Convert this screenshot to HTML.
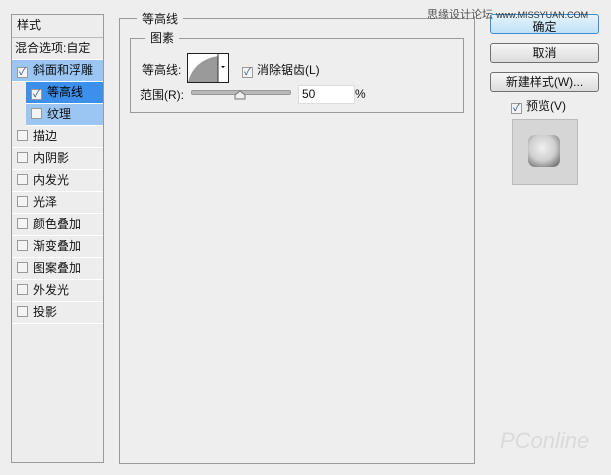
<html><head><style>
body{margin:0;width:611px;height:475px;background:#eeeeee;font-family:"Liberation Sans","Noto Sans CJK SC",sans-serif;font-size:12px;color:#111;position:relative;overflow:hidden}
.a{position:absolute;white-space:nowrap}
.lp{left:11px;top:14px;width:91px;height:447px;border:1px solid #9a9a9a;background:#ededed}
.row{position:absolute;left:0;width:91px;height:21px;border-bottom:1px solid #fff;line-height:21px}
.cb{display:inline-block;width:9px;height:9px;border:1px solid #9a9a9a;background:#f4f4f4;vertical-align:-1px;margin:0 5px 0 5px;position:relative;font-size:10px;line-height:9px;text-align:center;color:#2a4f8a}
.btn{position:absolute;left:490px;width:107px;height:18px;border:1px solid #707070;border-radius:3px;background:linear-gradient(#f6f6f6,#dcdcdc);text-align:center;line-height:18px;font-size:12px}
</style></head><body>
<div class="a lp">
<div class="row" style="top:0;height:22px;padding-left:5px;width:86px;border-bottom-color:#bbb">样式</div>
<div class="row" style="top:23px;padding-left:3px;width:88px">混合选项:自定</div>
<div class="row" style="top:45px;background:#9bc6f3"><span class="cb">✓</span>斜面和浮雕</div>
<div class="row" style="top:67px;left:14px;width:77px;background:#3c8fea;color:#000"><span class="cb">✓</span>等高线</div>
<div class="row" style="top:89px;left:14px;width:77px;background:#9bc6f3"><span class="cb"></span>纹理</div>
<div class="row" style="top:111px"><span class="cb"></span>描边</div>
<div class="row" style="top:133px"><span class="cb"></span>内阴影</div>
<div class="row" style="top:155px"><span class="cb"></span>内发光</div>
<div class="row" style="top:177px"><span class="cb"></span>光泽</div>
<div class="row" style="top:199px"><span class="cb"></span>颜色叠加</div>
<div class="row" style="top:221px"><span class="cb"></span>渐变叠加</div>
<div class="row" style="top:243px"><span class="cb"></span>图案叠加</div>
<div class="row" style="top:265px"><span class="cb"></span>外发光</div>
<div class="row" style="top:287px"><span class="cb"></span>投影</div>
</div>
<div class="a" style="left:119px;top:18px;width:354px;height:444px;border:1px solid #9a9a9a"></div>
<div class="a" style="left:137px;top:10px;padding:0 5px;background:#eeeeee">等高线</div>
<div class="a" style="left:130px;top:38px;width:332px;height:73px;border:1px solid #9a9a9a"></div>
<div class="a" style="left:145px;top:29px;padding:0 5px;background:#eeeeee">图素</div>
<div class="a" style="left:142px;top:61px">等高线:</div>
<div class="a" style="left:187px;top:53px;width:40px;height:28px;border:1px solid #222;background:#fff;overflow:hidden">
<svg width="40" height="28"><path d="M0 28 Q6 6 30 2 L30 28Z" fill="#9a9a9a"/><line x1="30" y1="0" x2="30" y2="28" stroke="#333"/><path d="M33 12h4l-2 2z" fill="#000"/></svg></div>
<div class="a" style="left:242px;top:61px"><span class="cb" style="margin:0 4px 0 0">✓</span>消除锯齿(L)</div>
<div class="a" style="left:140px;top:86px">范围(R):</div>
<div class="a" style="left:191px;top:90px;width:98px;height:3px;background:#b8b8b8;border:1px solid #999;border-radius:2px"></div>
<svg class="a" style="left:234px;top:90px" width="12" height="10"><path d="M1 9V5L6 1L11 5V9Z" fill="#eee" stroke="#777"/></svg>
<div class="a" style="left:298px;top:85px;width:52px;height:17px;background:#fff;border:1px solid #ddd;line-height:17px;padding-left:3px">50</div>
<div class="a" style="left:355px;top:87px">%</div>
<div class="btn" style="top:14px;border-color:#3a8fd0;background:linear-gradient(#e6f4fc,#bfe2f6);line-height:24px">确定</div>
<div class="a" style="left:427px;top:6px;font-size:11px;color:#555;"><span>思缘设计论坛</span> <span style="font-size:9px;color:#333">www.MISSYUAN.COM</span></div>
<div class="btn" style="top:43px">取消</div>
<div class="btn" style="top:72px">新建样式(W)...</div>
<div class="a" style="left:511px;top:97px"><span class="cb" style="margin:0 4px 0 0">✓</span>预览(V)</div>
<div class="a" style="left:512px;top:119px;width:64px;height:64px;background:#d6d6d6;border:1px solid #bbb"></div>
<div class="a" style="left:528px;top:135px;width:32px;height:32px;border-radius:7px;background:radial-gradient(circle at 45% 40%,#f0f0f0,#cfcfcf 50%,#555)"></div>
<div class="a" style="left:500px;top:428px;font-size:22px;color:#dadada;font-style:italic">PConline</div>
</body></html>
